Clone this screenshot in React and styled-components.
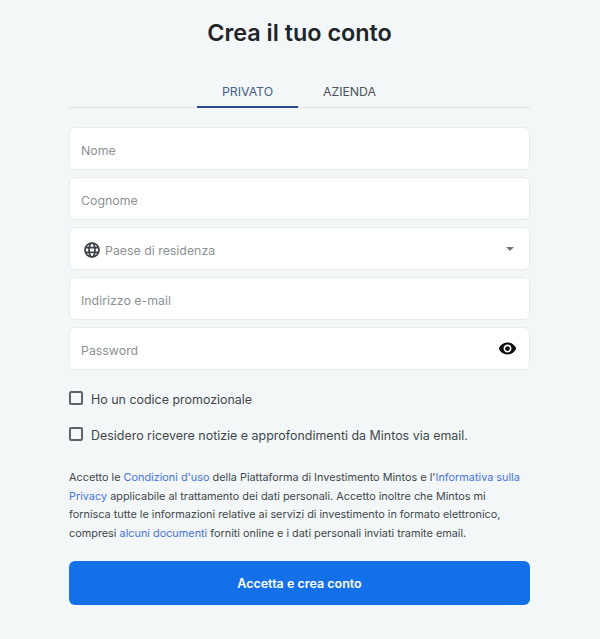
import React from "react";
import styled, { createGlobalStyle } from "styled-components";

const Global = createGlobalStyle`
  html, body { margin: 0; padding: 0; background: #f3f7f7; }
  * { box-sizing: border-box; }
`;
const Page = styled.div`
  width: 600px; height: 639px; overflow: hidden;
  background: #f3f7f7; padding: 0 70px 0 69px;
  font-family: Inter, "Liberation Sans", sans-serif;
  display: flex; flex-direction: column;
`;
const Title = styled.h1`
  margin: 18px 0 0; height: 30px; line-height: 30px;
  font-size: 23.4px; font-weight: 600; color: #1f2529; text-align: center;
`;
const Tabs = styled.div`
  margin-top: 29px; height: 31px; display: flex; justify-content: center;
  padding-right: 3px; border-bottom: 1px solid #dfe5e7;
`;
const Tab = styled.div`
  width: 101px; height: 31px; line-height: 30px; text-align: center;
  font-size: 12.3px; padding-left: ${p => (p.$active ? 0 : 2)}px;
  color: ${p => (p.$active ? "#4a5d8a" : "#4b5358")};
  border-bottom: ${p => (p.$active ? "2px solid #2c4a8f" : "none")};
`;
const Fields = styled.div`
  margin-top: 19px; display: flex; flex-direction: column; gap: 7px;
`;
const Field = styled.div`
  height: 43px; background: #fff; border: 1px solid #e8eced; border-radius: 6px;
  padding: 3px 13px 0 11px; display: flex; align-items: center; gap: 5px;
  font-size: 12.35px; color: #8b9195;
`;
const SelectField = styled(Field)`
  padding: 3px 15px 0 14px;
`;
const Label = styled.span`flex: 1;`;
const Check = styled.label`
  display: flex; align-items: center; gap: 8px;
  font-size: 12.44px; color: #3f474c; height: 20px;
`;
const Box = styled.span`
  width: 14px; height: 14px; border: 2px solid #5f6468; border-radius: 2px;
  margin-top: -3px; flex: none;
`;
const Checks = styled.div`
  margin-top: 19px; display: flex; flex-direction: column; gap: 16px;
`;
const Legal = styled.p`
  margin: 23px 0 0; font-size: 10.86px; line-height: 18.6px; color: #3f474c;
  white-space: nowrap;
`;
const Link = styled.a`color: #4672d8;`;
const Submit = styled.button`
  margin-top: 19px; height: 44px; width: 461px; border: 0; border-radius: 6px;
  background: #1370e8; color: #fff; font: 600 12.5px Inter, "Liberation Sans", sans-serif;
`;
const EyeIcon = styled.svg`margin: -3px -1px 0 0;`;
const GlobeIcon = styled.svg`margin-top: -1px;`;
const CaretIcon = styled.svg`margin-top: -2px;`;

const Globe = () => (
  <GlobeIcon width="16" height="16" viewBox="0 0 24 24" fill="none" stroke="#3c4145" strokeWidth="2.6">
    <circle cx="12" cy="12" r="10.5" />
    <ellipse cx="12" cy="12" rx="4.5" ry="10.5" />
    <path d="M2 8.5h20M2 15.5h20" />
  </GlobeIcon>
);
const Caret = () => (
  <CaretIcon width="8" height="4" viewBox="0 0 10 5"><path d="M0 0h10L5 5z" fill="#6f7478" /></CaretIcon>
);
const Eye = () => (
  <EyeIcon width="19" height="19" viewBox="0 0 24 24">
    <path fill="#0d0f11" d="M12 4.5C7 4.5 2.73 7.61 1 12c1.73 4.39 6 7.5 11 7.5s9.27-3.11 11-7.5c-1.73-4.39-6-7.5-11-7.5zM12 17c-2.76 0-5-2.24-5-5s2.24-5 5-5 5 2.24 5 5-2.24 5-5 5zm0-8c-1.66 0-3 1.34-3 3s1.34 3 3 3 3-1.34 3-3-1.34-3-3-3z" />
  </EyeIcon>
);

export default function App() {
  return (
    <Page>
      <Global />
      <Title>Crea il tuo conto</Title>
      <Tabs>
        <Tab $active>PRIVATO</Tab>
        <Tab>AZIENDA</Tab>
      </Tabs>
      <Fields>
        <Field><Label>Nome</Label></Field>
        <Field><Label>Cognome</Label></Field>
        <SelectField><Globe /><Label>Paese di residenza</Label><Caret /></SelectField>
        <Field><Label>Indirizzo e-mail</Label></Field>
        <Field><Label>Password</Label><Eye /></Field>
      </Fields>
      <Checks>
        <Check><Box />Ho un codice promozionale</Check>
        <Check><Box />Desidero ricevere notizie e approfondimenti da Mintos via email.</Check>
      </Checks>
      <Legal>
        Accetto le <Link>Condizioni d'uso</Link> della Piattaforma di Investimento Mintos e l'<Link>Informativa sulla</Link><br />
        <Link>Privacy</Link> applicabile al trattamento dei dati personali. Accetto inoltre che Mintos mi<br />
        fornisca tutte le informazioni relative ai servizi di investimento in formato elettronico,<br />
        compresi <Link>alcuni documenti</Link> forniti online e i dati personali inviati tramite email.
      </Legal>
      <Submit>Accetta e crea conto</Submit>
    </Page>
  );
}
